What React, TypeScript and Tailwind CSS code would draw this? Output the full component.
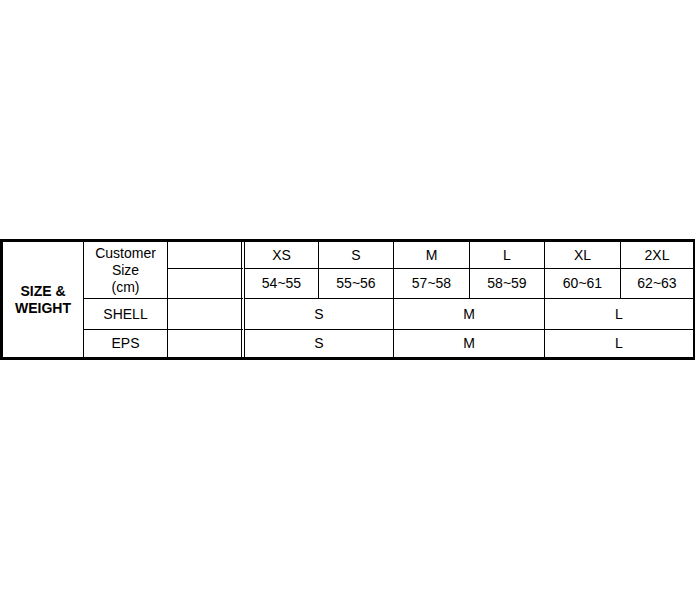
const sizes = [
  { label: 'XS', cm: '54~55' },
  { label: 'S', cm: '55~56' },
  { label: 'M', cm: '57~58' },
  { label: 'L', cm: '58~59' },
  { label: 'XL', cm: '60~61' },
  { label: '2XL', cm: '62~63' },
];

const spans = ['S', 'M', 'L'];

const cell = 'flex items-center justify-center border-black text-[14px] text-black';

export default function App() {
  return (
    <div className="w-[696px] h-[600px] bg-white pt-[239px]" style={{ fontFamily: '"Liberation Sans", Arial, sans-serif' }}>
      {/* size chart */}
      <div className="grid w-[695px] grid-cols-[81px_84px_77px_74px_75px_76px_75px_76px_72px] grid-rows-[27px_30px_31px_27px] border-l-[3px] border-t-[3px] border-b-[3px] border-r-2 border-black">
        <div className={`${cell} row-span-4 col-start-1 row-start-1 border-r font-bold leading-[17px] text-center`}>
          SIZE &amp;
          <br />
          WEIGHT
        </div>

        <div className={`${cell} row-span-2 col-start-2 row-start-1 border-r border-b text-center leading-[17px] pt-[1px]`}>
          Customer
          <br />
          Size
          <br />
          (cm)
        </div>
        <div className={`${cell} col-start-2 row-start-3 border-r border-b`}>SHELL</div>
        <div className={`${cell} col-start-2 row-start-4 border-r`}>EPS</div>

        {/* empty column with double rule */}
        <div className="col-start-3 row-start-1 border-r-4 border-b border-double border-black" />
        <div className="col-start-3 row-start-2 border-r-4 border-b border-double border-black" />
        <div className="col-start-3 row-start-3 border-r-4 border-b border-double border-black" />
        <div className="col-start-3 row-start-4 border-r-4 border-double border-black" />

        {sizes.map((s, i) => (
          <div key={s.label} className={`${cell} row-start-1 border-b ${i < 5 ? 'border-r' : ''}`}>
            {s.label}
          </div>
        ))}
        {sizes.map((s, i) => (
          <div key={s.cm} className={`${cell} row-start-2 border-b ${i < 5 ? 'border-r' : ''}`}>
            {s.cm}
          </div>
        ))}
        {spans.map((s, i) => (
          <div key={'shell' + s} className={`${cell} col-span-2 row-start-3 border-b ${i < 2 ? 'border-r' : ''}`}>
            {s}
          </div>
        ))}
        {spans.map((s, i) => (
          <div key={'eps' + s} className={`${cell} col-span-2 row-start-4 ${i < 2 ? 'border-r' : ''}`}>
            {s}
          </div>
        ))}
      </div>
    </div>
  );
}
